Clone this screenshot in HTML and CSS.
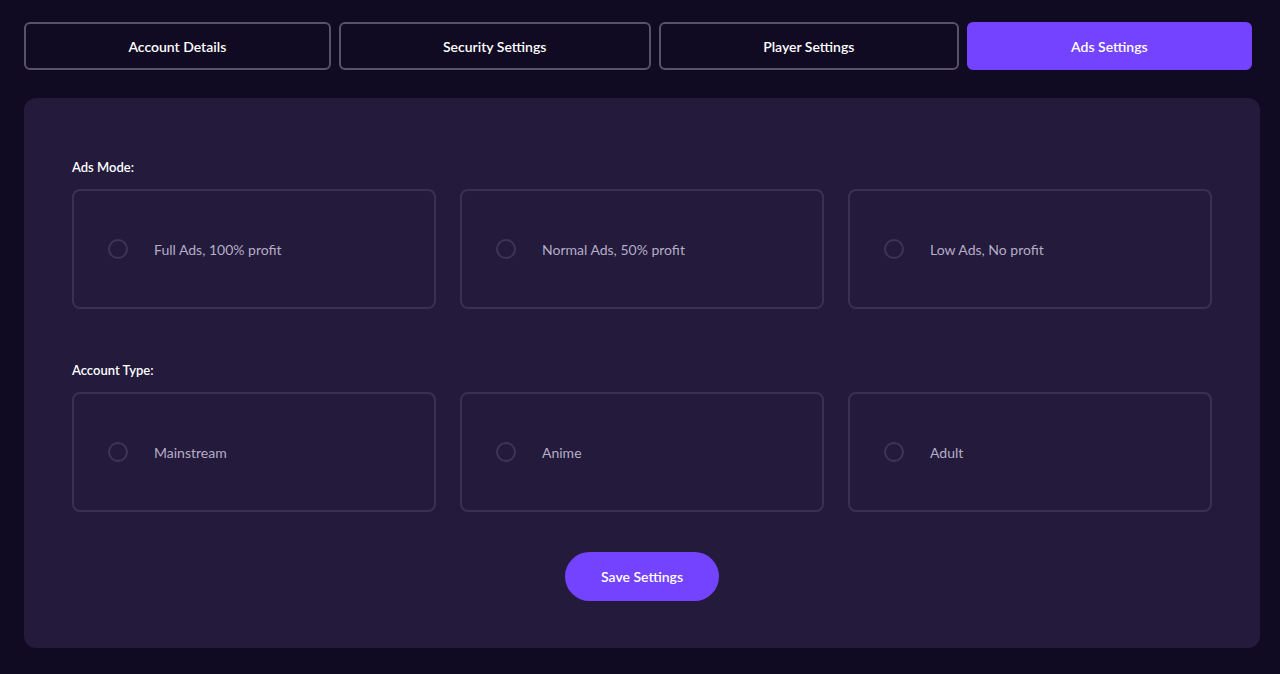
FILE: index.html
```html
<!DOCTYPE html>
<html>
  <head>
    <title>Ads Settings</title>
    <meta name="viewport" content="width=device-width, initial-scale=1" />
    <link rel="stylesheet" href="styles.css">
  </head>
  <body>
    <div class="tabs">
      <button class="tab">Account Details</button>
      <button class="tab">Security Settings</button>
      <button class="tab">Player Settings</button>
      <button class="tab active">Ads Settings</button>
    </div>
    <div class="panel">
      <p class="label">Ads Mode:</p>
      <div class="options">
        <label class="option"><span class="radio"></span>Full Ads, 100% profit</label>
        <label class="option"><span class="radio"></span>Normal Ads, 50% profit</label>
        <label class="option"><span class="radio"></span>Low Ads, No profit</label>
      </div>
      <p class="label second">Account Type:</p>
      <div class="options">
        <label class="option"><span class="radio"></span>Mainstream</label>
        <label class="option"><span class="radio"></span>Anime</label>
        <label class="option"><span class="radio"></span>Adult</label>
      </div>
      <div class="actions">
        <button class="save">Save Settings</button>
      </div>
    </div>
  </body>
</html>
```

FILE: styles.css
```css
html {
  font-family: Lato, "Noto Sans", sans-serif;
}
body {
  margin: 0;
  padding: 22px 20px 26px 24px;
  background-color: #100a22;
  color: #fff;
}
.tabs {
  display: flex;
  gap: 8px;
  width: 1228px;
}
.tab {
  flex: 1 1 auto;
  height: 48px;
  font-family: inherit;
  font-size: 14px;
  font-weight: 600;
  color: #fff;
  background-color: #100a22;
  border: 2px solid #5a5268;
  border-radius: 6px;
}
.tab.active {
  background-color: #7443ff;
  border-color: #7443ff;
}
.panel {
  margin-top: 28px;
  background-color: #231a3c;
  border-radius: 12px;
  padding: 61px 48px 47px;
}
.label {
  margin: 0 0 13px;
  font-size: 13px;
  font-weight: 600;
  line-height: 17px;
  color: #fff;
}
.label.second {
  margin-top: 53px;
}
.options {
  display: grid;
  grid-template-columns: repeat(3, 1fr);
  gap: 24px;
}
.option {
  display: flex;
  align-items: center;
  height: 120px;
  box-sizing: border-box;
  padding: 0 34px;
  border: 2px solid #3a3150;
  border-radius: 8px;
  font-size: 14px;
  color: #b5adc6;
}
.radio {
  width: 20px;
  height: 20px;
  box-sizing: border-box;
  border: 2px solid #3e3555;
  border-radius: 50%;
  margin-right: 26px;
}
.actions {
  display: flex;
  justify-content: center;
  margin-top: 40px;
}
.save {
  width: 154px;
  height: 49px;
  font-family: inherit;
  font-size: 14px;
  font-weight: 600;
  color: #fff;
  background-color: #7443ff;
  border: none;
  border-radius: 25px;
}
```
